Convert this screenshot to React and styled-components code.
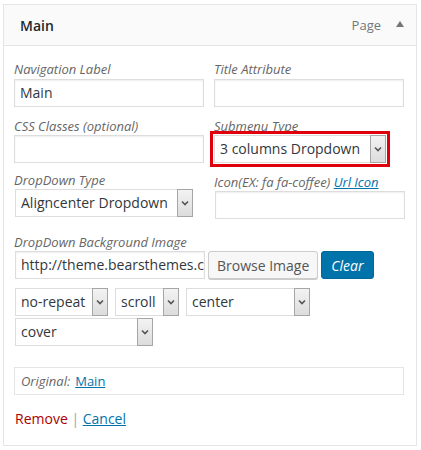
import styled, { createGlobalStyle } from 'styled-components';

const GlobalStyle = createGlobalStyle`
  body {
    margin: 0;
    background: #ffffff;
    font-family: "Open Sans", "Liberation Sans", sans-serif;
  }
`;

const Panel = styled.div`
  margin: 4px 0 0 3px;
  width: 414px;
  height: 442px;
  box-sizing: border-box;
  border: 1px solid #e5e5e5;
  background: #fff;
`;

const Header = styled.div`
  display: flex;
  align-items: center;
  height: 41px;
  box-sizing: border-box;
  padding: 0 12px 0 16px;
  background: #fafafa;
  border-bottom: 1px solid #e5e5e5;
`;

const Title = styled.span`
  flex: 1;
  font-size: 14px;
  font-weight: 600;
  color: #23282d;
`;

const ItemType = styled.span`
  font-size: 13px;
  color: #72777c;
  margin-right: 15px;
`;

const Toggle = styled.span`
  width: 0;
  height: 0;
  border-left: 4px solid transparent;
  border-right: 4px solid transparent;
  border-bottom: 6px solid #72777c;
  margin-bottom: 2px;
`;

const Body = styled.div`
  padding: 14px 12px 0 10px;
`;

const Row = styled.div`
  display: grid;
  grid-template-columns: 190px 190px;
  column-gap: 10px;
  align-items: start;
  margin-bottom: ${p => p.$mb || 10}px;
`;

const Field = styled.div`
  display: flex;
  flex-direction: column;
  padding-top: ${p => p.$pt || 0}px;
`;

const Label = styled.label`
  display: block;
  font-size: 13px;
  font-style: italic;
  color: #666;
  line-height: 18px;
  height: 18px;
  white-space: nowrap;
  margin-bottom: ${p => p.$mb || 0}px;
`;

const Link = styled.a`
  color: #0073aa;
  text-decoration: underline;
`;

const TextInput = styled.div`
  height: 28px;
  flex-shrink: 0;
  box-sizing: border-box;
  border: 1px solid #ddd;
  box-shadow: inset 0 1px 2px rgba(0, 0, 0, 0.07);
  padding: 0 5px;
  font-size: 14px;
  line-height: 26px;
  color: #32373c;
  white-space: nowrap;
  overflow: hidden;
  width: ${p => p.$w || 190}px;
  margin-left: ${p => p.$ml || 0}px;
`;

const SelectBox = styled.div`
  display: flex;
  height: 28px;
  box-sizing: border-box;
  width: ${p => p.$w}px;
  margin-left: ${p => p.$ml || 0}px;
  border: 1px solid #ddd;
  background: #fff;
  ${p => p.$highlight && `
    outline: 3px solid #e0000b;
    outline-offset: 1px;
  `}
`;

const SelectText = styled.span`
  flex: 1;
  padding-left: 5px;
  font-size: 14px;
  line-height: 26px;
  color: #32373c;
  white-space: nowrap;
  overflow: hidden;
`;

const ArrowBox = styled.span`
  width: 16px;
  box-sizing: border-box;
  border: 1px solid #a6a6a6;
  margin: -1px -1px -1px 0;
  background: linear-gradient(#f3f3f3, #dcdcdc);
  display: flex;
  align-items: center;
  justify-content: center;
`;

const Select = ({ value, width, highlight, ml }) => (
  <SelectBox $w={width} $highlight={highlight} $ml={ml}>
    <SelectText>{value}</SelectText>
    <ArrowBox>
      <svg width="8" height="6" viewBox="0 0 8 6">
        <path d="M1 1.5 L4 4.5 L7 1.5" fill="none" stroke="#555" strokeWidth="1.6" />
      </svg>
    </ArrowBox>
  </SelectBox>
);

const ImageRow = styled.div`
  display: flex;
  align-items: center;
  gap: 3px;
  margin-bottom: 9px;
`;

const Button = styled.button`
  height: 28px;
  box-sizing: border-box;
  padding: 0 ${p => (p.$primary ? 9 : 8)}px;
  border-radius: 3px;
  font-family: inherit;
  font-size: 14px;
  border: 1px solid ${p => (p.$primary ? '#006799' : '#ccc')};
  background: ${p => (p.$primary ? '#0073aa' : '#f7f7f7')};
  color: ${p => (p.$primary ? '#fff' : '#555')};
  font-style: ${p => (p.$primary ? 'italic' : 'normal')};
  box-shadow: ${p => (p.$primary ? 'none' : '0 1px 0 #ccc')};
`;

const SelectLine = styled.div`
  display: flex;
  gap: 7px;
  margin-left: 1px;
  margin-bottom: 2px;
`;

const Original = styled.div`
  margin-top: 21px;
  width: 390px;
  height: 28px;
  box-sizing: border-box;
  border: 1px solid #e5e5e5;
  padding: 0 6px;
  font-size: 13px;
  line-height: 26px;
  color: #666;
`;

const OrigLabel = styled.span`
  font-style: italic;
  margin-right: 5px;
`;

const Actions = styled.div`
  margin-top: 14px;
  font-size: 14px;
  line-height: 20px;
  color: #a0a5aa;
  padding-left: 1px;
`;

const Remove = styled.a`
  color: #a00;
  text-decoration: none;
`;

const Cancel = styled.a`
  color: #0073aa;
  text-decoration: underline;
`;

export default function App() {
  return (
    <>
      <GlobalStyle />
      <Panel>
        <Header>
          <Title>Main</Title>
          <ItemType>Page</ItemType>
          <Toggle />
        </Header>
        <Body>
          <Row>
            <Field>
              <Label $mb={1}>Navigation Label</Label>
              <TextInput>Main</TextInput>
            </Field>
            <Field>
              <Label $mb={1}>Title Attribute</Label>
              <TextInput />
            </Field>
          </Row>
          <Row $mb={8}>
            <Field>
              <Label>CSS Classes (optional)</Label>
              <TextInput $w={190} />
            </Field>
            <Field>
              <Label>Submenu Type</Label>
              <Select value="3 columns Dropdown" width={172} highlight />
            </Field>
          </Row>
          <Row $mb={14}>
            <Field>
              <Label>DropDown Type</Label>
              <Select value="Aligncenter Dropdown" width={178} ml={1} />
            </Field>
            <Field $pt={2}>
              <Label>
                Icon(EX: fa fa-coffee) <Link href="#">Url Icon</Link>
              </Label>
              <TextInput $ml={1} />
            </Field>
          </Row>
          <Label>DropDown Background Image</Label>
          <ImageRow>
            <TextInput $w={190} $ml={1}>http://theme.bearsthemes.com/</TextInput>
            <Button>Browse Image</Button>
            <Button $primary>Clear</Button>
          </ImageRow>
          <SelectLine>
            <Select value="no-repeat" width={93} />
            <Select value="scroll" width={64} />
            <Select value="center" width={124} />
          </SelectLine>
          <SelectLine>
            <Select value="cover" width={138} />
          </SelectLine>
          <Original>
            <OrigLabel>Original:</OrigLabel>
            <Link href="#">Main</Link>
          </Original>
          <Actions>
            <Remove href="#">Remove</Remove> | <Cancel href="#">Cancel</Cancel>
          </Actions>
        </Body>
      </Panel>
    </>
  );
}
